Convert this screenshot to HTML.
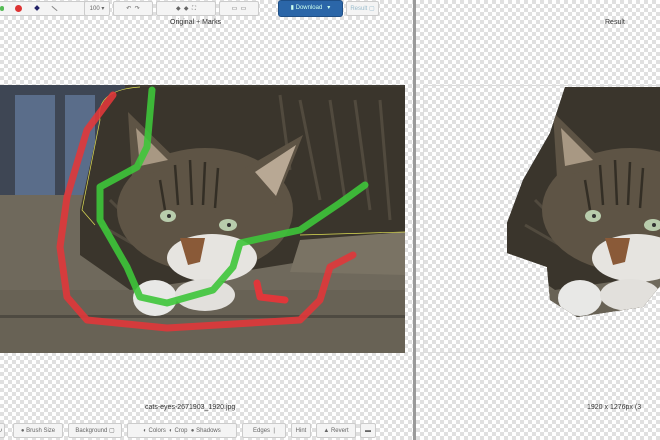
<!DOCTYPE html>
<html><head><meta charset="utf-8"><style>
html,body{margin:0;padding:0;width:660px;height:440px;overflow:hidden;
background-color:#fff;
background-image:linear-gradient(45deg,#e0e0e0 25%,transparent 25%,transparent 75%,#e0e0e0 75%),linear-gradient(45deg,#e0e0e0 25%,transparent 25%,transparent 75%,#e0e0e0 75%);
background-size:8px 8px;background-position:0 0,4px 4px;font-family:"Liberation Sans",sans-serif;position:relative}
.b{position:absolute;height:15px;background:#f4f4f4;border:1px solid #ccc;border-radius:2px;font-size:6px;color:#666;line-height:15px;text-align:center;box-sizing:border-box}
.t{position:absolute;font-size:7px;color:#333}
</style></head><body>
<div class="b" style="left:-3px;top:1px;width:100px"></div>
<div style="position:absolute;left:0;top:6px;width:4px;height:5px;background:#5b5;border-radius:2px"></div>
<div style="position:absolute;left:15px;top:5px;width:7px;height:7px;background:#d33;border-radius:50%"></div>
<div style="position:absolute;left:35px;top:6px;width:4px;height:4px;background:#226;transform:rotate(45deg)"></div>
<div style="position:absolute;left:51px;top:8px;width:7px;height:1px;background:#888;transform:rotate(40deg)"></div>
<div class="b" style="left:84px;top:1px;width:26px">100 ▾</div>
<div class="b" style="left:113px;top:1px;width:40px">↶ &nbsp;↷</div>
<div class="b" style="left:156px;top:1px;width:60px">◆ &nbsp;◆ &nbsp;⛶</div>
<div class="b" style="left:219px;top:1px;width:40px">▭ &nbsp;▭</div>
<div class="b" style="left:278px;top:0;width:65px;height:17px;background:#2b66a8;border-color:#1f4f86;color:#cfe;border-radius:3px">▮ Download &nbsp; ▾</div>
<div class="b" style="left:346px;top:1px;width:33px;color:#9bc">Result ▢</div>
<div class="t" style="left:170px;top:19px">Original + Marks</div>
<div class="t" style="left:605px;top:19px">Result</div>
<div style="position:absolute;left:413px;top:0;width:3px;height:440px;background:#9a9a9a"></div>
<div style="position:absolute;left:423px;top:85px;width:237px;height:1px;background:#ddd"></div>
<div style="position:absolute;left:423px;top:352px;width:237px;height:1px;background:#ddd"></div>
<div style="position:absolute;left:423px;top:85px;width:1px;height:268px;background:#ddd"></div>
<svg width="660" height="440" style="position:absolute;left:0;top:0">
<defs>
<clipPath id="ph"><rect x="0" y="85" width="405" height="268"/></clipPath>
<clipPath id="cut"><path d="M140 87 L240 87 L240 280 L218 307 L152 317 L125 300 L122 267 L82 253 L82 223 L98 180 L125 133 Z"/></clipPath>
<g id="photo">
<rect x="0" y="85" width="405" height="268" fill="#3f3b33"/>
<rect x="0" y="85" width="125" height="120" fill="#3e4654"/>
<rect x="15" y="95" width="40" height="100" fill="#5a6d8a"/>
<rect x="65" y="95" width="30" height="100" fill="#5a6d8a"/>
<rect x="0" y="195" width="405" height="160" fill="#6f695c"/>
<rect x="0" y="290" width="405" height="65" fill="#686255"/>
<rect x="0" y="315" width="405" height="3" fill="#4e4a41"/>
<path d="M100 120 Q95 90 140 87 L405 87 L405 235 L360 240 L300 262 L250 270 L200 280 L130 290 L80 255 L80 210 Z" fill="#3a352c"/>
<path d="M300 240 L405 232 L405 275 L290 272 Z" fill="#7a7364"/>
<g stroke="#5c5446" stroke-width="3" opacity=".7">
<path d="M300 100 L320 200 M330 100 L345 200 M355 100 L370 210 M280 95 L290 170 M380 100 L390 220 M110 200 L140 230 M100 225 L135 245"/>
</g>
<ellipse cx="205" cy="210" rx="88" ry="62" fill="#5e5445"/>
<path d="M128 112 L182 165 L132 178 Z" fill="#5e5445"/><path d="M136 128 L168 160 L140 166 Z" fill="#a89883"/>
<path d="M303 135 L245 168 L275 205 Z" fill="#5e5445"/><path d="M296 145 L255 172 L276 196 Z" fill="#b8a894"/>
<g stroke="#332e25" stroke-width="2.5"><path d="M175 165 L178 205 M190 160 L192 205 M205 162 L203 205 M218 168 L215 208 M160 180 L165 210"/></g>
<ellipse cx="212" cy="258" rx="45" ry="24" fill="#e6e4e0"/>
<ellipse cx="155" cy="298" rx="22" ry="18" fill="#e8e8e6"/>
<ellipse cx="205" cy="295" rx="30" ry="16" fill="#e2e0dc"/>
<path d="M180 238 L205 238 L200 262 L188 265 Z" fill="#8a5a38"/>
<ellipse cx="168" cy="216" rx="8" ry="6" fill="#b8ccac"/><circle cx="169" cy="216" r="2" fill="#333"/>
<ellipse cx="228" cy="225" rx="9" ry="6" fill="#b8ccac"/><circle cx="229" cy="225" r="2" fill="#333"/>
</g>
</defs>
<use href="#photo" clip-path="url(#ph)"/>
<path d="M100 120 Q95 90 140 87" fill="none" stroke="#dd5" stroke-width=".7"/>
<path d="M100 120 L82 210 L95 225 M300 235 L405 232" fill="none" stroke="#dd5" stroke-width=".7"/>
<path d="M113 95 L87 130 L67 197 L60 247 L67 297 L87 320 L167 328 L300 320 L320 300 L330 267 L353 255" fill="none" stroke="#e0373a" stroke-width="7" stroke-linecap="round" stroke-linejoin="round" opacity=".9"/>
<path d="M257 283 L260 297 L285 300" fill="none" stroke="#e0373a" stroke-width="7" stroke-linecap="round" stroke-linejoin="round"/>
<path d="M152 90 L147 147 L137 167 L100 187 L100 220 L127 267 L140 297 L167 303 L213 290 L233 267 L240 243 L300 230 L340 203 L365 185" fill="none" stroke="#3ec53a" stroke-width="7" stroke-linecap="round" stroke-linejoin="round" opacity=".9"/>
<g transform="translate(425 0)" clip-path="url(#cut)"><use href="#photo"/></g>
</svg>
<div class="t" style="left:145px;top:404px">cats-eyes-2671903_1920.jpg</div>
<div class="t" style="left:587px;top:404px">1920 x 1276px (3</div>
<div class="b" style="left:-5px;top:423px;width:10px">↻</div>
<div class="b" style="left:13px;top:423px;width:50px">● Brush Size</div>
<div class="b" style="left:68px;top:423px;width:54px">Background ▢</div>
<div class="b" style="left:127px;top:423px;width:110px">◐ Colors &nbsp;◐ Crop &nbsp;● Shadows</div>
<div class="b" style="left:242px;top:423px;width:44px">Edges &nbsp;|</div>
<div class="b" style="left:291px;top:423px;width:20px">Hint</div>
<div class="b" style="left:316px;top:423px;width:40px">▲ Revert</div>
<div class="b" style="left:360px;top:423px;width:16px">▬</div>
</body></html>
